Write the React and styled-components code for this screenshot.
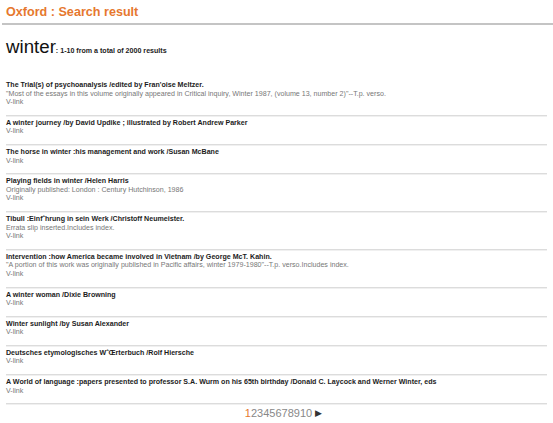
import React from 'react';
import styled, { createGlobalStyle } from 'styled-components';

const results = [
    {
        title: 'The Trial(s) of psychoanalysis /edited by Fran\'oise Meltzer.',
        note: '"Most of the essays in this volume originally appeared in Critical inquiry, Winter 1987, (volume 13, number 2)"--T.p. verso.',
    },
    { title: 'A winter journey /by David Updike ; illustrated by Robert Andrew Parker' },
    { title: 'The horse in winter :his management and work /Susan McBane' },
    {
        title: 'Playing fields in winter /Helen Harris',
        note: 'Originally published: London : Century Hutchinson, 1986',
    },
    {
        title: 'Tibull :Einf\u02c6hrung in sein Werk /Christoff Neumeister.',
        note: 'Errata slip inserted.Includes index.',
    },
    {
        title: 'Intervention :how America became involved in Vietnam /by George McT. Kahin.',
        note: '"A portion of this work was originally published in Pacific affairs, winter 1979-1980"--T.p. verso.Includes index.',
    },
    { title: 'A winter woman /Dixie Browning' },
    { title: 'Winter sunlight /by Susan Alexander' },
    { title: 'Deutsches etymologisches W\u02c6\u0152rterbuch /Rolf Hiersche' },
    {
        title: 'A World of language :papers presented to professor S.A. Wurm on his 65th birthday /Donald C. Laycock and Werner Winter, eds',
    },
];

const pages = [1, 2, 3, 4, 5, 6, 7, 8, 9, 10];

function App() {
    return (
        <>
            <GlobalStyle />
            <Page>
                <Header>
                    <h1>Oxford : Search result</h1>
                </Header>

                <Query>
                    <span className="term">winter</span>
                    <span className="count">: 1-10 from a total of 2000 results</span>
                </Query>

                <ResultList>
                    {results.map((item, i) => (
                        <Result key={i}>
                            <Title>{item.title}</Title>
                            {item.note && <Note>{item.note}</Note>}
                            <Note>V-link</Note>
                        </Result>
                    ))}
                </ResultList>

                <Pager>
                    {pages.map((p) => (
                        <PageNum key={p} $current={p === 1}>{p}</PageNum>
                    ))}
                    <Next>&#9654;</Next>
                </Pager>
            </Page>
        </>
    );
}

const GlobalStyle = createGlobalStyle`
    body {
        margin: 0;
        background: #fff;
        font-family: "Liberation Sans", Arial, sans-serif;
    }
`;

const Page = styled.div`
    width: 553px;
`;

const Header = styled.div`
    margin: 0 0 0 2px;
    padding: 5px 4px 4px;
    border-bottom: 2px solid #c4c4c4;

    h1 {
        margin: 0;
        font-size: 12.6px;
        line-height: 14px;
        font-weight: bold;
        color: #e6782e;
    }
`;

const Query = styled.div`
    padding: 12px 6px 0;
    color: #111;

    .term {
        font-size: 18.7px;
        line-height: 20px;
    }

    .count {
        font-size: 7.1px;
        font-weight: bold;
        color: #222;
    }
`;

const ResultList = styled.div`
    margin: 21px 6px 0;
`;

const Result = styled.div`
    padding: 3px 0 8px;
    border-bottom: 1px solid #dcdcdc;
    box-shadow: 0 1px 0 #f0f0f0;
`;

const Title = styled.div`
    font-size: 7.1px;
    line-height: 8.6px;
    font-weight: bold;
    color: #1c1c1c;
`;

const Note = styled.div`
    font-size: 7.1px;
    line-height: 8.6px;
    color: #777;
`;

const Pager = styled.div`
    display: flex;
    justify-content: center;
    align-items: center;
    padding: 3px 0 0 14px;
    font-size: 11px;
    line-height: 12px;
`;

const PageNum = styled.span`
    color: ${(p) => (p.$current ? '#e6782e' : '#888')};
`;

const Next = styled.span`
    margin-left: 3px;
    font-size: 9px;
    color: #333;
`;

export default App;
